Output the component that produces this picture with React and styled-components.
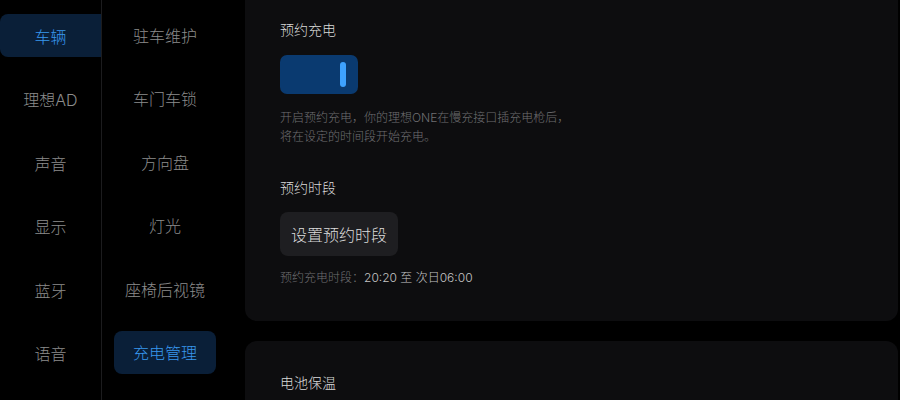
import React, { useState } from "react";
import styled, { createGlobalStyle } from "styled-components";

const GlobalStyle = createGlobalStyle`
  html, body {
    margin: 0;
    padding: 0;
    background: #000;
  }
  body {
    font-family: Inter, "Noto Sans CJK SC", "Noto Sans", sans-serif;
    font-weight: 300;
    overflow: hidden;
  }
`;

const MAIN_MENU = ["车辆", "理想AD", "声音", "显示", "蓝牙", "语音"];
const SUB_MENU = ["驻车维护", "车门车锁", "方向盘", "灯光", "座椅后视镜", "充电管理"];

function App() {
  const [mainTab, setMainTab] = useState("车辆");
  const [subTab, setSubTab] = useState("充电管理");
  const [scheduled, setScheduled] = useState(true);

  return (
    <>
      <GlobalStyle />
      <Screen>
        <MainNav>
          {MAIN_MENU.map(item => (
            <MainItem
              key={item}
              $active={item === mainTab}
              onClick={() => setMainTab(item)}
            >
              {item}
            </MainItem>
          ))}
        </MainNav>

        <SubNav>
          {SUB_MENU.map(item => (
            <SubItem
              key={item}
              $active={item === subTab}
              onClick={() => setSubTab(item)}
            >
              {item}
            </SubItem>
          ))}
        </SubNav>

        <Content>
          <CardList>
            <Card>
              <Title>预约充电</Title>
              <Toggle $on={scheduled} onClick={() => setScheduled(!scheduled)}>
                <Knob />
              </Toggle>
              <Hint>
                开启预约充电，你的理想ONE在慢充接口插充电枪后，
                <br />
                将在设定的时间段开始充电。
              </Hint>

              <Title $top={32}>预约时段</Title>
              <SetButton>设置预约时段</SetButton>
              <TimeLine>
                预约充电时段：<TimeValue>20:20 至 次日06:00</TimeValue>
              </TimeLine>
            </Card>

            <Card $padTop={32}>
              <Title>电池保温</Title>
            </Card>
          </CardList>
        </Content>
      </Screen>
    </>
  );
}

export default App;

const Screen = styled.div`
  display: flex;
  width: 900px;
  height: 400px;
  background: #000;
  overflow: hidden;
`;

const MainNav = styled.nav`
  width: 101px;
  flex-shrink: 0;
  border-right: 1px solid #1c1c1e;
  display: flex;
  flex-direction: column;
  gap: 20.6px;
  padding-top: 14px;
`;

const MainItem = styled.div`
  height: 43px;
  display: flex;
  align-items: center;
  justify-content: center;
  font-size: 16px;
  color: ${p => (p.$active ? "#3897ee" : "#8c8c8c")};
  background: ${p => (p.$active ? "#0a1f38" : "transparent")};
  border-radius: 8px 0 0 8px;
  cursor: pointer;
`;

const SubNav = styled.nav`
  width: 126px;
  flex-shrink: 0;
  display: flex;
  flex-direction: column;
  align-items: center;
  gap: 20.6px;
  padding-top: 13px;
`;

const SubItem = styled.div`
  height: 43px;
  min-width: 102px;
  box-sizing: border-box;
  padding: 0 12px;
  display: flex;
  align-items: center;
  justify-content: center;
  font-size: 16px;
  color: ${p => (p.$active ? "#3897ee" : "#8c8c8c")};
  background: ${p => (p.$active ? "#0a1f38" : "transparent")};
  border-radius: 8px;
  cursor: pointer;
`;

const Content = styled.main`
  flex: 1;
  padding: 0 2px 0 17px;
  overflow: hidden;
`;

const CardList = styled.div`
  display: flex;
  flex-direction: column;
  gap: 20px;
  margin-top: -20px;
`;

const Card = styled.section`
  background: #0d0d0f;
  border-radius: 12px;
  padding: ${p => p.$padTop || 40}px 35px 34px;
  display: flex;
  flex-direction: column;
  align-items: flex-start;
  min-height: 60px;
`;

const Title = styled.div`
  font-size: 14px;
  line-height: 20px;
  color: #dadada;
  margin-top: ${p => (p.$top ? `${p.$top}px` : "0")};
`;

const Toggle = styled.div`
  margin-top: 15px;
  width: 78px;
  height: 39px;
  border-radius: 7px;
  background: ${p => (p.$on ? "#0a3a70" : "#2a2a2d")};
  display: flex;
  align-items: center;
  justify-content: ${p => (p.$on ? "flex-end" : "flex-start")};
  padding: 0 12px;
  box-sizing: border-box;
  cursor: pointer;
`;

const Knob = styled.div`
  width: 6px;
  height: 25px;
  border-radius: 3px;
  background: #3ea2ff;
`;

const Hint = styled.p`
  margin: 14px 0 0;
  font-size: 12px;
  line-height: 19px;
  color: #6f6f72;
`;

const SetButton = styled.button`
  margin-top: 14px;
  height: 44px;
  padding: 0 11px;
  border: none;
  border-radius: 8px;
  background: #1e1e21;
  color: #dcdcdc;
  font-family: inherit;
  font-weight: inherit;
  font-size: 16px;
  cursor: pointer;
`;

const TimeLine = styled.div`
  margin-top: 13px;
  font-size: 12px;
  line-height: 18px;
  color: #6f6f72;
`;

const TimeValue = styled.span`
  font-size: 12px;
  color: #c4c4c4;
`;
